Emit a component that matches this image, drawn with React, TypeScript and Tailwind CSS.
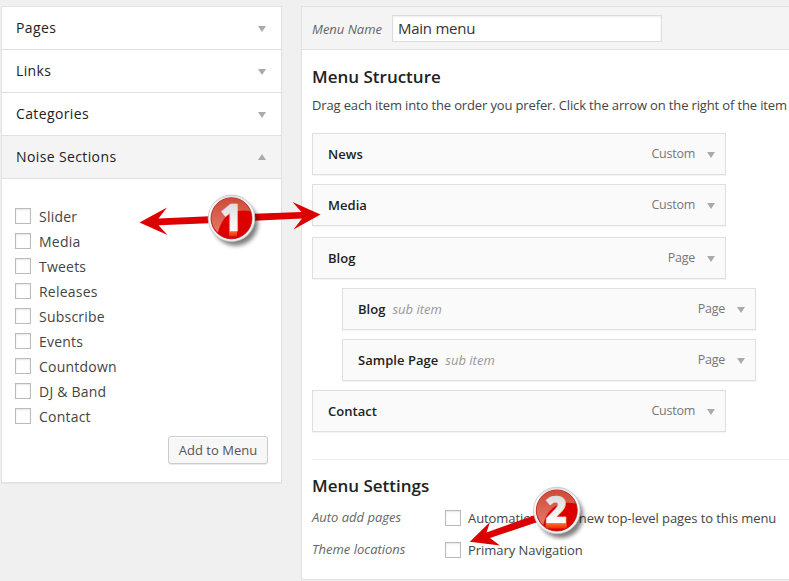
const sections = ["Pages", "Links", "Categories"];
const choices = ["Slider", "Media", "Tweets", "Releases", "Subscribe", "Events", "Countdown", "DJ & Band", "Contact"];

type Item = { title: string; kind: string; sub?: boolean; gap?: string };
const items: Item[] = [
  { title: "News", kind: "Custom" },
  { title: "Media", kind: "Custom", gap: "mt-[9px]" },
  { title: "Blog", kind: "Page", gap: "mt-[11px]" },
  { title: "Blog", kind: "Page", sub: true, gap: "mt-[9px]" },
  { title: "Sample Page", kind: "Page", sub: true, gap: "mt-[9px]" },
  { title: "Contact", kind: "Custom", gap: "mt-[9px]" },
];

function Arrow({ up = false }: { up?: boolean }) {
  return (
    <svg width="8" height="6" viewBox="0 0 8 6" className="block shrink-0">
      <path d={up ? "M0 6 L4 0 L8 6 Z" : "M0 0 H8 L4 6 Z"} fill="#aaa" />
    </svg>
  );
}

function Checkbox() {
  return <span className="block size-4 shrink-0 border border-[#bbb] bg-white shadow-[inset_0_1px_2px_rgba(0,0,0,0.1)]" />;
}

function MenuItem({ item }: { item: Item }) {
  return (
    <div
      className={`flex h-[42px] w-[414px] items-center border border-[#dfdfdf] bg-[#fafafa] pr-[10px] pl-[15px] text-[13px] leading-5 shadow-[0_1px_1px_rgba(0,0,0,0.04)] ${item.sub ? "ml-[30px]" : ""} ${item.gap ?? ""}`}
    >
      <span className="font-[550] tracking-[0.04px] text-[#222]">{item.title}</span>
      {item.sub && <span className="ml-[7px] text-[#999] italic">sub item</span>}
      <span className="mr-[12px] ml-auto text-[12.500px] tracking-[-0.25px] text-[#777]">{item.kind}</span>
      <div className="pt-[2px]"><Arrow /></div>
    </div>
  );
}

function SectionHeader({ label, open = false }: { label: string; open?: boolean }) {
  return (
    <div className={`flex h-[43px] items-center justify-between border-b border-[#dfdfdf] pr-[15px] pl-[14px] text-[14px] font-medium tracking-[0.38px] text-[#222] ${open ? "bg-[#f4f4f4]" : ""}`}>
      <span className="pb-[2px]">{label}</span>
      <div className={open ? "" : "pt-[2px]"}><Arrow up={open} /></div>
    </div>
  );
}

function Badge({ x, y, n, glowX, glowWidth }: { x: number; y: number; n: string; glowX: number; glowWidth: number }) {
  return (
    <g transform={`translate(${x} ${y})`}>
      <circle cx="4" cy="5" r="22.5" fill="#000" opacity="0.5" filter="url(#soft)" />
      <circle r="23.3" fill="url(#rim)" stroke="#c4c4c4" strokeWidth="0.8" />
      <circle r="20.5" fill="#dd0000" stroke="#a81818" strokeWidth="0.8" />
      <path d="M-19.6 4 A20 20 0 0 1 18.8 -7 C10 -9 -3 -7 -9 3 C-12 8 -13 12 -13.500 14.500 A20 20 0 0 1 -19.6 4 Z" fill="url(#gloss)" />
      <rect x={glowX} y="13" width={glowWidth} height="5" fill="url(#glow)" />
      <text x="-0.5" y="12.500" textAnchor="middle" fontFamily="Open Sans, sans-serif" fontWeight="800" fontSize="37" fill="url(#digit)" stroke="url(#digit)" strokeWidth="0.6">{n}</text>
    </g>
  );
}

function Annotations() {
  return (
    <svg width="789" height="581" viewBox="0 0 789 581" className="pointer-events-none absolute top-0 left-0">
      <defs>
        <filter id="soft" x="-30%" y="-30%" width="160%" height="160%"><feGaussianBlur stdDeviation="2.2" /></filter>
        <linearGradient id="rim" x1="0" y1="0" x2="0" y2="1"><stop offset="0" stopColor="#dedede" /><stop offset="0.3" stopColor="#fff" /><stop offset="1" stopColor="#eee" /></linearGradient>
        <linearGradient id="gloss" x1="0" y1="0" x2="0" y2="1"><stop offset="0" stopColor="#cc4b38" /><stop offset="1" stopColor="#e77767" /></linearGradient>
        <linearGradient id="glow" x1="0" y1="0" x2="0" y2="1"><stop offset="0" stopColor="#ff6a2c" /><stop offset="1" stopColor="#ee2a00" /></linearGradient>
        <linearGradient id="digit" x1="0" y1="0" x2="0" y2="1"><stop offset="0.2" stopColor="#dadada" /><stop offset="0.8" stopColor="#fff" /></linearGradient>
      </defs>
      <g fill="#dd0000">
        <path d="M139.500 222.500 L167 207.500 L158.500 218.500 L215 216 V223 L158.500 225.300 L167.500 235 Z" />
        <path d="M320.500 214.500 L292.500 202 L301.500 212 L250 214 V221 L302 218.500 L293.500 229.500 Z" />
        <path d="M469.800 541.800 L490 522 L486.500 532.500 L539 513.500 L542 520.500 L490 538 L500 545.500 Z" />
      </g>
      <Badge x={231.500} y={218.300} n="1" glowX={-2.500} glowWidth={8} />
      <Badge x={556.800} y={510.500} n="2" glowX={-11} glowWidth={21} />
    </svg>
  );
}

export default function App() {
  return (
    <div className="relative flex h-[581px] w-[789px] items-start overflow-hidden bg-[#f0f0f0] pt-[6px] pl-px font-['Open_Sans',sans-serif] text-[#444]">
      <aside className="h-[477px] w-[281px] shrink-0 border border-[#e2e2e2] bg-white shadow-[0_1px_1px_rgba(0,0,0,0.04)]">
        {sections.map((s) => <SectionHeader key={s} label={s} />)}
        <SectionHeader label="Noise Sections" open />
        <div className="px-[13px] pt-[24px]">
          {choices.map((c) => (
            <label key={c} className="flex h-[25px] items-center gap-2 text-[14px] leading-5 tracking-[0.22px]">
              <Checkbox />
              <span className="pt-[2px]">{c}</span>
            </label>
          ))}
          <button className="mt-[8px] ml-auto block h-7 w-[100px] rounded-[3px] border border-[#ccc] bg-[#f7f7f7] text-[13px] leading-[26px] whitespace-nowrap text-[#555] shadow-[inset_0_1px_0_#fff,0_1px_0_rgba(0,0,0,0.08)]">
            Add to Menu
          </button>
        </div>
      </aside>

      <main className="ml-[19px] h-[574px] w-[520px] shrink-0 border border-[#e2e2e2] bg-white">
        <header className="flex h-[43px] items-center border-b border-[#dfdfdf] bg-[#f4f4f4] pl-[10px]">
          <span className="w-[80px] pt-[3px] text-[13px] whitespace-nowrap text-[#666] italic">Menu Name</span>
          <div className="flex h-[27px] w-[270px] items-center border border-[#ddd] bg-white pl-[5px] text-[15px] tracking-[-0.25px] text-[#333] shadow-[inset_0_1px_2px_rgba(0,0,0,0.07)]">Main menu</div>
        </header>
        <div className="pl-[10px]">
          <h3 className="mt-[15px] h-6 text-[17px] leading-6 font-semibold text-[#222]">Menu Structure</h3>
          <p className="mt-[6px] h-5 text-[13px] leading-5 tracking-[-0.14px] whitespace-nowrap">Drag each item into the order you prefer. Click the arrow on the right of the item</p>
          <div className="mt-[18px]">
            {items.map((item, i) => <MenuItem key={i} item={item} />)}
          </div>
          <section className="mt-[27px] border-t border-[#eee]">
            <h3 className="mt-[14px] h-6 text-[17px] leading-6 font-semibold text-[#222]">Menu Settings</h3>
            <div className="mt-1 flex h-8 items-center text-[13px]">
              <span className="w-[133px] text-[#666] italic">Auto add pages</span>
              <Checkbox />
              <span className="ml-[7px] pt-[2px] tracking-[-0.08px] whitespace-nowrap">Automatically add new top-level pages to this menu</span>
            </div>
            <div className="flex h-8 items-center text-[13px]">
              <span className="w-[133px] text-[#666] italic">Theme locations</span>
              <Checkbox />
              <span className="ml-[7px] pt-[2px] tracking-[-0.05px]">Primary Navigation</span>
            </div>
          </section>
        </div>
      </main>
      <Annotations />
    </div>
  );
}
